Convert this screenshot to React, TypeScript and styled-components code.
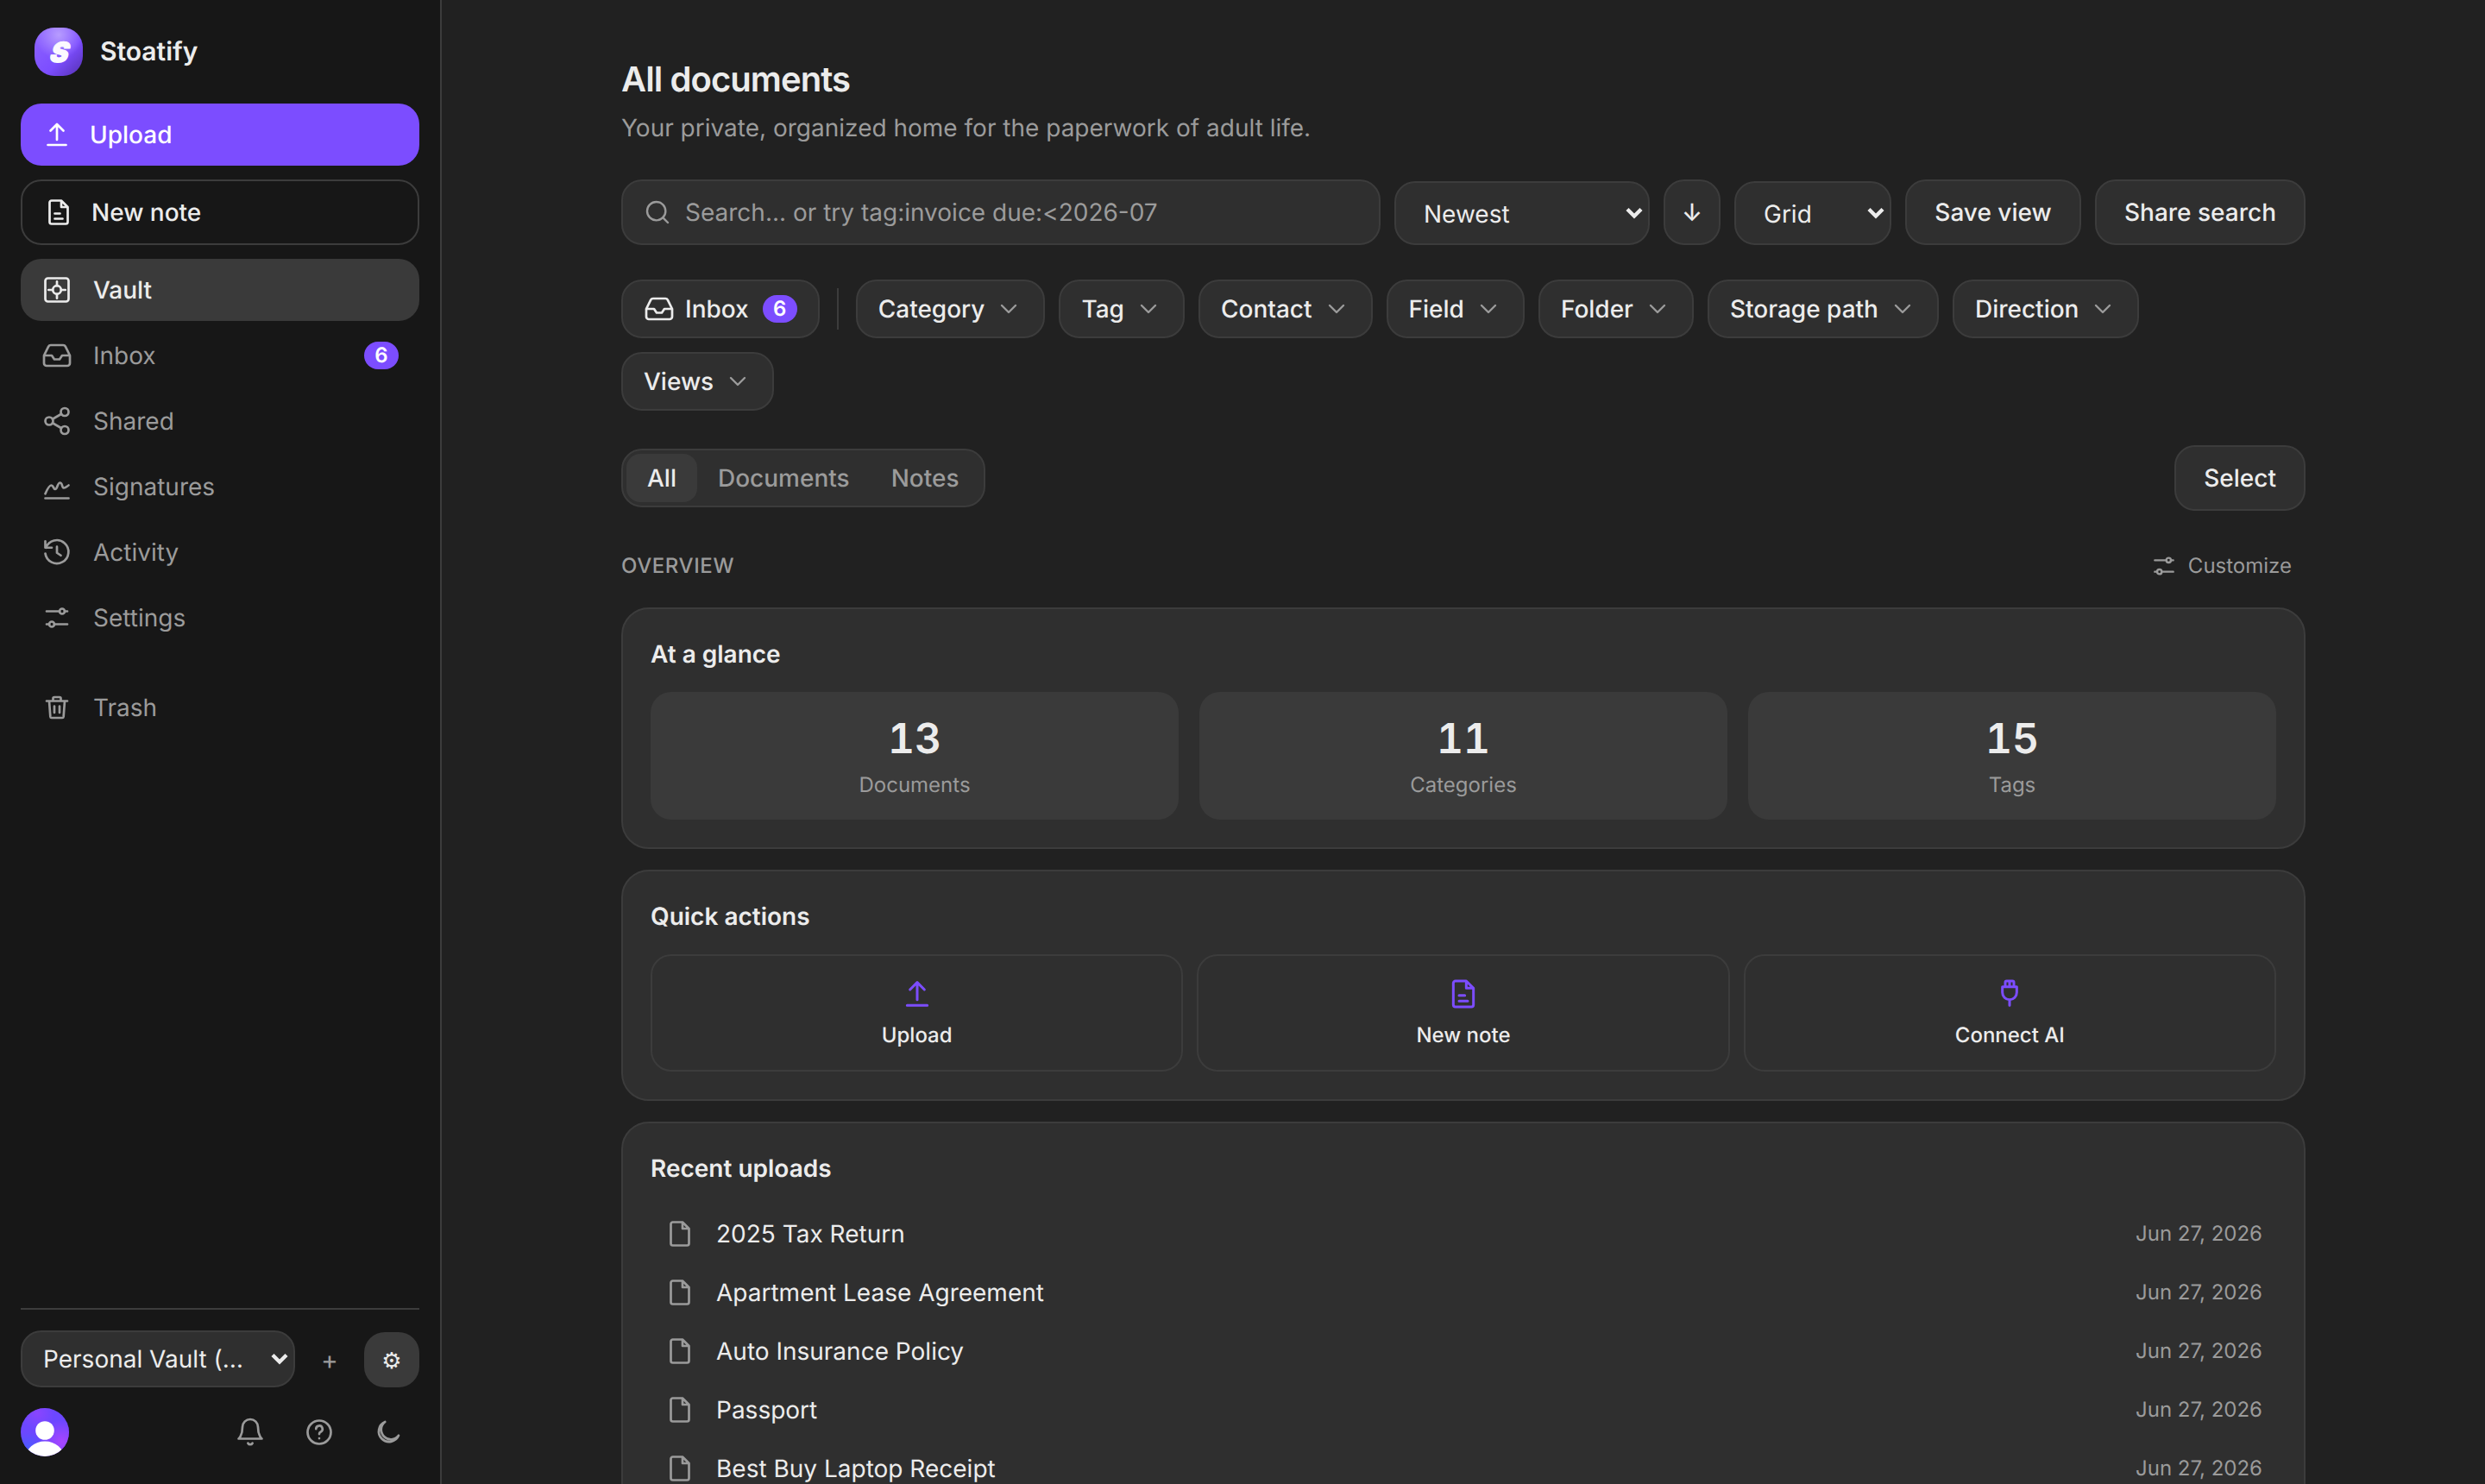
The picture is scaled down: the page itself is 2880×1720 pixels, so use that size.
import React, { useState } from "react";
import styled, { createGlobalStyle, css } from "styled-components";

const GlobalStyle = createGlobalStyle`
  *, *::before, *::after {
    box-sizing: border-box;
  }

  body {
    margin: 0;
    background-color: #212121;
    color: #ececec;
    font-family: "Inter", "Liberation Sans", sans-serif;
    font-size: 28px;
    line-height: 1.5;
    text-rendering: geometricPrecision;
    overflow: hidden;
  }

  button {
    font: inherit;
    color: inherit;
    text-rendering: inherit;
    cursor: pointer;
    margin: 0;
  }
`;

const Svg = styled.svg<{ $size: number }>`
  display: block;
  flex: none;
  width: ${(p) => p.$size}px;
  height: ${(p) => p.$size}px;
  fill: none;
  stroke: currentColor;
  stroke-width: 1.8;
  stroke-linecap: round;
  stroke-linejoin: round;
`;

const icons = {
  upload: <path d="M12 16V4M7 9l5-5 5 5M5 20h14" />,
  note: (
    <path d="M14 3H6.5A1.5 1.5 0 0 0 5 4.5v15A1.5 1.5 0 0 0 6.5 21h11a1.5 1.5 0 0 0 1.5-1.5V8zM14 3v5h5M9 13h4M9 17h6" />
  ),
  file: <path d="M14 3H6.5A1.5 1.5 0 0 0 5 4.5v15A1.5 1.5 0 0 0 6.5 21h11a1.5 1.5 0 0 0 1.5-1.5V8zM14 3v5h5" />,
  vault: (
    <>
      <rect x="3" y="3" width="18" height="18" rx="2" />
      <circle cx="12" cy="12" r="3.2" />
      <path d="M12 5.5v3.2M12 15.3v3.2M5.5 12h3.2M15.3 12h3.2" />
    </>
  ),
  inbox: (
    <path d="M22 12h-6l-2 3h-4l-2-3H2M5.45 5.11L2 12v6a2 2 0 0 0 2 2h16a2 2 0 0 0 2-2v-6l-3.45-6.89A2 2 0 0 0 16.76 4H7.24a2 2 0 0 0-1.79 1.11z" />
  ),
  share: (
    <>
      <circle cx="18" cy="5" r="3" />
      <circle cx="6" cy="12" r="3" />
      <circle cx="18" cy="19" r="3" />
      <path d="M8.59 13.51l6.83 3.98M15.41 6.51l-6.82 3.98" />
    </>
  ),
  signature: (
    <path d="M3 17.5c1.5-3.5 3-6.5 4.6-6.5 1.9 0 1.5 3 3.1 3s1.7-5 3.7-5 1.2 4 3 4c1.2 0 2.4-1.2 3.6-2M3 21h18" />
  ),
  history: <path d="M3 3.5V8.5h5M3.5 8.5A9 9 0 1 1 3 13M12 7.8v4.7l3 2" />,
  sliders: (
    <>
      <path d="M4 7h10M18 7h2M4 17h2M10 17h10" />
      <circle cx="16" cy="7" r="2" />
      <circle cx="8" cy="17" r="2" />
    </>
  ),
  trash: (
    <path d="M4 7h16M9 7V5a1 1 0 0 1 1-1h4a1 1 0 0 1 1 1v2M6 7l.9 12.1a1 1 0 0 0 1 .9h8.2a1 1 0 0 0 1-.9L18 7M10 11v5M14 11v5" />
  ),
  bell: <path d="M18 8a6 6 0 0 0-12 0c0 7-3 9-3 9h18s-3-2-3-9M13.73 20.5a2 2 0 0 1-3.46 0" />,
  help: (
    <>
      <circle cx="12" cy="12" r="9" />
      <path d="M9.5 9.5a2.5 2.5 0 1 1 3.7 2.2c-.8.4-1.2.9-1.2 1.7M12 16.7v.01" />
    </>
  ),
  moon: <path d="M20 14.5A8 8 0 1 1 9.5 4a7.5 7.5 0 1 0 10.5 10.5z" />,
  search: (
    <>
      <circle cx="11" cy="11" r="8" />
      <path d="M21 21l-4.35-4.35" />
    </>
  ),
  chevron: <path d="M6 9l6 6 6-6" />,
  plug: <path d="M9 7V4a1 1 0 0 1 1-1h4a1 1 0 0 1 1 1v3M12 3.5V7M7 7h10v4a5 5 0 0 1-10 0zM12 16v4" />,
};

type IconName = keyof typeof icons;

function Icon({ name, size = 36 }: { name: IconName; size?: number }) {
  return (
    <Svg $size={size} viewBox="0 0 24 24">
      {icons[name]}
    </Svg>
  );
}

const Layout = styled.div`
  display: flex;
  height: 1720px;
  overflow: hidden;
`;

const Sidebar = styled.aside`
  flex: none;
  display: flex;
  flex-direction: column;
  width: 512px;
  padding: 24px;
  background-color: #171717;
  border-right: 2px solid #3c3c3c;
`;

const Brand = styled.div`
  display: flex;
  align-items: center;
  gap: 20px;
  height: 72px;
  padding: 0 16px;
  margin-bottom: 24px;
  font-size: 30px;
  font-weight: 600;
`;

const BrandMark = styled.svg`
  width: 56px;
  height: 56px;

  text {
    font-family: "Inter", sans-serif;
    font-size: 32px;
    font-weight: 900;
    font-style: italic;
  }
`;

const SideButton = styled.button<{ $primary?: boolean }>`
  display: flex;
  align-items: center;
  gap: 20px;
  height: 76px;
  padding: 0 24px;
  margin-bottom: 16px;
  border: 2px solid #3c3c3c;
  border-radius: 24px;
  background: transparent;
  font-weight: 500;

  ${(p) =>
    p.$primary &&
    css`
      height: 72px;
      border: none;
      background-color: #7c4dff;
      color: #fff;
    `}
`;

const Nav = styled.nav`
  display: flex;
  flex-direction: column;
  gap: 4px;
`;

const NavItem = styled.a<{ $active?: boolean; $apart?: boolean }>`
  display: flex;
  align-items: center;
  gap: 24px;
  height: 72px;
  padding: 0 24px;
  margin-top: ${(p) => (p.$apart ? "28px" : "0")};
  border-radius: 24px;
  background-color: ${(p) => (p.$active ? "#3a3a3a" : "transparent")};
  color: ${(p) => (p.$active ? "#ececec" : "#9b9b9b")};
  font-weight: ${(p) => (p.$active ? 500 : 400)};
  cursor: pointer;
`;

const Badge = styled.span`
  display: inline-flex;
  align-items: center;
  justify-content: center;
  width: 40px;
  height: 32px;
  border-radius: 16px;
  background-color: #7c4dff;
  color: #fff;
  font-size: 24px;
  font-weight: 600;
  line-height: 32px;

  ${NavItem} & {
    margin-left: auto;
  }
`;

const SidebarFooter = styled.div`
  display: flex;
  flex-direction: column;
  gap: 16px;
  margin-top: auto;
  padding-top: 24px;
  border-top: 2px solid #3c3c3c;
`;

const VaultRow = styled.div`
  display: flex;
  align-items: flex-end;
  gap: 8px;
`;

const VaultSelect = styled.div`
  flex: 1;
  display: flex;
  align-items: center;
  justify-content: space-between;
  height: 66px;
  padding: 0 6px 0 24px;
  border: 2px solid #3c3c3c;
  border-radius: 24px;
  background-color: #2f2f2f;
  white-space: nowrap;
`;

const SquareButton = styled.button<{ $filled?: boolean }>`
  display: flex;
  align-items: center;
  justify-content: center;
  width: 64px;
  height: 64px;
  padding: 2px 0 0;
  border: none;
  border-radius: 24px;
  background-color: ${(p) => (p.$filled ? "#3a3a3a" : "transparent")};
  color: ${(p) => (p.$filled ? "#ececec" : "#9b9b9b")};
  font-size: ${(p) => (p.$filled ? "26px" : "30px")};
`;

const UserRow = styled.div`
  display: flex;
  align-items: center;
  gap: 8px;
  height: 72px;
`;

const Avatar = styled.svg`
  width: 56px;
  height: 56px;
  margin-right: auto;
`;

const IconButton = styled.button`
  display: flex;
  align-items: center;
  justify-content: center;
  width: 72px;
  height: 72px;
  padding: 0;
  border: none;
  background: none;
  color: #9b9b9b;
`;

const Main = styled.main`
  flex: 1;
  padding: 64px 208px 0;
`;

const Title = styled.h1`
  margin: 0;
  font-size: 40px;
  font-weight: 600;
  line-height: 56px;
  letter-spacing: -0.023em;
`;

const Subtitle = styled.p`
  margin: 7px 0 39px;
  color: #9b9b9b;
  line-height: 42px;
`;

const Toolbar = styled.div`
  display: flex;
  align-items: flex-end;
  gap: 16px;
`;

const control = css`
  border: 2px solid #3c3c3c;
  border-radius: 24px;
  background-color: #2f2f2f;
`;

const SearchBox = styled.div`
  ${control}
  flex: 1;
  display: flex;
  align-items: center;
  gap: 16px;
  height: 76px;
  padding: 0 24px;
  color: #9b9b9b;
`;

const SelectBox = styled.div<{ $width: number }>`
  ${control}
  display: flex;
  align-items: center;
  justify-content: space-between;
  width: ${(p) => p.$width}px;
  height: 74px;
  padding: 2px 6px 0 32px;

  svg {
    margin-bottom: 3px;
  }
`;

const Button = styled.button<{ $width?: number }>`
  ${control}
  display: flex;
  align-items: center;
  justify-content: center;
  width: ${(p) => (p.$width ? `${p.$width}px` : "auto")};
  height: 76px;
  padding: ${(p) => (p.$width ? "0" : "0 32px")};
  font-weight: 500;
  white-space: nowrap;
`;

const Filters = styled.div`
  display: flex;
  flex-wrap: wrap;
  align-items: center;
  gap: 16px;
  margin-top: 40px;
`;

const Chip = styled.button`
  ${control}
  display: flex;
  align-items: center;
  gap: 12px;
  height: 68px;
  padding: 0 24px;
  font-weight: 500;
  white-space: nowrap;

  ${Badge} {
    margin-left: 4px;
  }
`;

const ChipChevron = styled.span`
  color: #9b9b9b;
`;

const Divider = styled.span`
  width: 2px;
  height: 48px;
  margin: 0 4px;
  background-color: #3c3c3c;
`;

const TabRow = styled.div`
  display: flex;
  align-items: center;
  justify-content: space-between;
  margin-top: 40px;
`;

const Tabs = styled.div`
  ${control}
  display: flex;
  padding: 4px;
`;

const Tab = styled.button<{ $active?: boolean }>`
  height: 56px;
  padding: 0 24px;
  border: none;
  border-radius: 16px;
  background-color: ${(p) => (p.$active ? "#3a3a3a" : "transparent")};
  color: ${(p) => (p.$active ? "#ececec" : "#9b9b9b")};
  font-weight: 500;
`;

const OverviewHeader = styled.div`
  display: flex;
  align-items: center;
  justify-content: space-between;
  height: 48px;
  margin: 40px 0 24px;
  color: #9b9b9b;
  font-size: 24px;
`;

const SectionLabel = styled.h2`
  margin: 0;
  font-size: 24px;
  font-weight: 500;
  letter-spacing: 0.025em;
  text-transform: uppercase;
`;

const Customize = styled.button`
  display: flex;
  align-items: center;
  gap: 12px;
  padding: 0 16px;
  border: none;
  background: none;
`;

const Card = styled.section`
  margin-bottom: 24px;
  padding: 32px;
  border: 2px solid #3c3c3c;
  border-radius: 32px;
  background-color: #2f2f2f;
`;

const CardTitle = styled.h3`
  margin: 0 0 24px;
  font-size: 28px;
  font-weight: 600;
  line-height: 40px;
`;

const Grid = styled.div<{ $gap: number }>`
  display: grid;
  grid-template-columns: repeat(3, 1fr);
  gap: ${(p) => p.$gap}px;
`;

const Stat = styled.div`
  display: flex;
  flex-direction: column;
  align-items: center;
  gap: 8px;
  padding: 24px;
  border-radius: 24px;
  background-color: #3a3a3a;
`;

const StatValue = styled.span`
  font-size: 48px;
  font-weight: 600;
  line-height: 60px;
  font-variant-numeric: tabular-nums;
`;

const StatLabel = styled.span`
  color: #9b9b9b;
  font-size: 24px;
  line-height: 32px;
`;

const Action = styled.button`
  display: flex;
  flex-direction: column;
  align-items: center;
  gap: 12px;
  padding: 24px;
  border: 2px solid #3c3c3c;
  border-radius: 24px;
  background: transparent;
  font-size: 24px;
  font-weight: 500;
  line-height: 32px;

  svg {
    color: #7c4dff;
  }
`;

const DocumentList = styled.div`
  display: flex;
  flex-direction: column;
  gap: 4px;
`;

const DocumentRow = styled.div`
  display: flex;
  align-items: center;
  gap: 24px;
  height: 64px;
  padding: 0 16px;

  svg {
    color: #9b9b9b;
  }
`;

const DocumentDate = styled.span`
  margin-left: auto;
  color: #9b9b9b;
  font-size: 24px;
`;

const navItems: { icon: IconName; label: string; badge?: number; apart?: boolean }[] = [
  { icon: "vault", label: "Vault" },
  { icon: "inbox", label: "Inbox", badge: 6 },
  { icon: "share", label: "Shared" },
  { icon: "signature", label: "Signatures" },
  { icon: "history", label: "Activity" },
  { icon: "sliders", label: "Settings" },
  { icon: "trash", label: "Trash", apart: true },
];

const filters = ["Category", "Tag", "Contact", "Field", "Folder", "Storage path", "Direction", "Views"];

const tabs = ["All", "Documents", "Notes"];

const stats = [
  { value: 13, label: "Documents" },
  { value: 11, label: "Categories" },
  { value: 15, label: "Tags" },
];

const actions: { icon: IconName; label: string }[] = [
  { icon: "upload", label: "Upload" },
  { icon: "note", label: "New note" },
  { icon: "plug", label: "Connect AI" },
];

const documents = [
  "2025 Tax Return",
  "Apartment Lease Agreement",
  "Auto Insurance Policy",
  "Passport",
  "Best Buy Laptop Receipt",
];

function SelectArrow() {
  return (
    <svg width="20" height="14" viewBox="0 0 20 14" fill="none" stroke="#ececec" strokeWidth="4.4">
      <path d="M2 2.5l8 8 8-8" />
    </svg>
  );
}

function Logo() {
  return (
    <BrandMark viewBox="0 0 56 56">
      <defs>
        <linearGradient id="logo-base" x1="0" y1="0" x2="1" y2="1">
          <stop offset="0" stopColor="#8f66ff" />
          <stop offset="0.6" stopColor="#7c4dff" />
          <stop offset="1" stopColor="#5430b0" />
        </linearGradient>
        <radialGradient id="logo-glow" cx="0.5" cy="0.15" r="0.5">
          <stop offset="0" stopColor="#b79cff" />
          <stop offset="1" stopColor="#b79cff" stopOpacity="0" />
        </radialGradient>
      </defs>
      <rect width="56" height="56" rx="23" fill="url(#logo-base)" />
      <rect width="56" height="56" rx="23" fill="url(#logo-glow)" />
      <text
        transform="translate(28 39.5) skewX(-8)"
        textAnchor="middle"
        fill="#fbf9ff"
        stroke="#fbf9ff"
        strokeWidth="1.2"
      >
        S
      </text>
    </BrandMark>
  );
}

function UserAvatar() {
  return (
    <Avatar viewBox="0 0 56 56">
      <defs>
        <clipPath id="avatar-clip">
          <circle cx="28" cy="28" r="28" />
        </clipPath>
        <radialGradient id="avatar-pink" cx="0.85" cy="0.7" r="0.45">
          <stop offset="0" stopColor="#a845ff" />
          <stop offset="1" stopColor="#a845ff" stopOpacity="0" />
        </radialGradient>
        <radialGradient id="avatar-top" cx="0.35" cy="0.1" r="0.35">
          <stop offset="0" stopColor="#8a45ff" />
          <stop offset="1" stopColor="#8a45ff" stopOpacity="0" />
        </radialGradient>
        <radialGradient id="avatar-blue" cx="0.15" cy="0.85" r="0.35">
          <stop offset="0" stopColor="#4a5bff" />
          <stop offset="1" stopColor="#4a5bff" stopOpacity="0" />
        </radialGradient>
      </defs>
      <g clipPath="url(#avatar-clip)">
        <rect width="56" height="56" fill="#6c47ff" />
        <rect width="56" height="56" fill="url(#avatar-pink)" />
        <rect width="56" height="56" fill="url(#avatar-top)" />
        <rect width="56" height="56" fill="url(#avatar-blue)" />
        <circle cx="28" cy="26" r="10.8" fill="#fff" />
        <ellipse cx="28" cy="57" rx="22" ry="18.5" fill="#fff" />
      </g>
    </Avatar>
  );
}

function App(): React.ReactElement {
  const [activeNav, setActiveNav] = useState("Vault");
  const [activeTab, setActiveTab] = useState("All");

  return (
    <>
      <GlobalStyle />
      <Layout>
        <Sidebar>
          <Brand>
            <Logo />
            Stoatify
          </Brand>
          <SideButton $primary>
            <Icon name="upload" />
            Upload
          </SideButton>
          <SideButton>
            <Icon name="note" />
            New note
          </SideButton>
          <Nav>
            {navItems.map((item) => (
              <NavItem
                key={item.label}
                $active={item.label === activeNav}
                $apart={item.apart}
                onClick={() => setActiveNav(item.label)}
              >
                <Icon name={item.icon} />
                {item.label}
                {item.badge && <Badge>{item.badge}</Badge>}
              </NavItem>
            ))}
          </Nav>
          <SidebarFooter>
            <VaultRow>
              <VaultSelect>
                Personal Vault (…
                <SelectArrow />
              </VaultSelect>
              <SquareButton>+</SquareButton>
              <SquareButton $filled>⚙</SquareButton>
            </VaultRow>
            <UserRow>
              <UserAvatar />
              <IconButton>
                <Icon name="bell" />
              </IconButton>
              <IconButton>
                <Icon name="help" />
              </IconButton>
              <IconButton>
                <Icon name="moon" />
              </IconButton>
            </UserRow>
          </SidebarFooter>
        </Sidebar>
        <Main>
          <Title>All documents</Title>
          <Subtitle>Your private, organized home for the paperwork of adult life.</Subtitle>
          <Toolbar>
            <SearchBox>
              <Icon name="search" size={32} />
              Search... or try tag:invoice due:&lt;2026-07
            </SearchBox>
            <SelectBox $width={296}>
              Newest
              <SelectArrow />
            </SelectBox>
            <Button $width={66}>↓</Button>
            <SelectBox $width={182}>
              Grid
              <SelectArrow />
            </SelectBox>
            <Button $width={204}>Save view</Button>
            <Button $width={244}>Share search</Button>
          </Toolbar>
          <Filters>
            <Chip>
              <Icon name="inbox" />
              Inbox
              <Badge>6</Badge>
            </Chip>
            <Divider />
            {filters.map((name) => (
              <Chip key={name}>
                {name}
                <ChipChevron>
                  <Icon name="chevron" size={32} />
                </ChipChevron>
              </Chip>
            ))}
          </Filters>
          <TabRow>
            <Tabs>
              {tabs.map((tab) => (
                <Tab key={tab} $active={tab === activeTab} onClick={() => setActiveTab(tab)}>
                  {tab}
                </Tab>
              ))}
            </Tabs>
            <Button>Select</Button>
          </TabRow>
          <OverviewHeader>
            <SectionLabel>Overview</SectionLabel>
            <Customize>
              <Icon name="sliders" size={32} />
              Customize
            </Customize>
          </OverviewHeader>
          <Card>
            <CardTitle>At a glance</CardTitle>
            <Grid $gap={24}>
              {stats.map((stat) => (
                <Stat key={stat.label}>
                  <StatValue>{stat.value}</StatValue>
                  <StatLabel>{stat.label}</StatLabel>
                </Stat>
              ))}
            </Grid>
          </Card>
          <Card>
            <CardTitle>Quick actions</CardTitle>
            <Grid $gap={16}>
              {actions.map((action) => (
                <Action key={action.label}>
                  <Icon name={action.icon} size={40} />
                  {action.label}
                </Action>
              ))}
            </Grid>
          </Card>
          <Card>
            <CardTitle>Recent uploads</CardTitle>
            <DocumentList>
              {documents.map((name) => (
                <DocumentRow key={name}>
                  <Icon name="file" />
                  {name}
                  <DocumentDate>Jun 27, 2026</DocumentDate>
                </DocumentRow>
              ))}
            </DocumentList>
          </Card>
        </Main>
      </Layout>
    </>
  );
}

export default App;
